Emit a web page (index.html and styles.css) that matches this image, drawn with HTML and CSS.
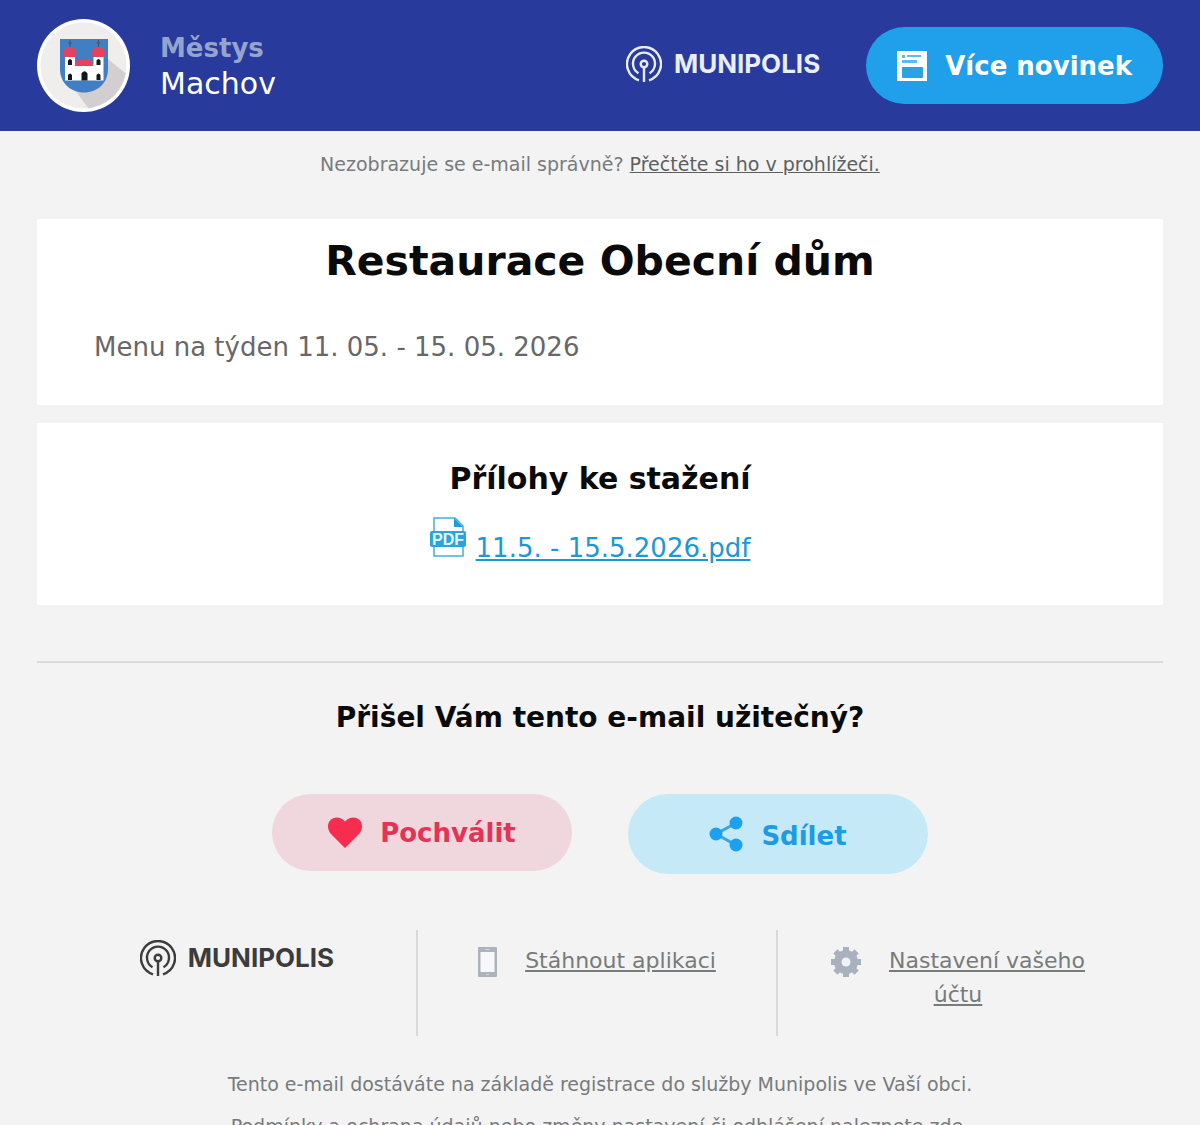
FILE: index.html
```html
<!DOCTYPE html>
<html lang="cs">
<head>
    <meta charset="UTF-8">
    <meta name="viewport" content="width=device-width, initial-scale=1.0">
    <title>Restaurace Obecní dům</title>
    <link rel="stylesheet" href="styles.css">
</head>
<body>
    <header class="header">
        <div class="municipality">
            <svg class="crest" viewBox="0 0 93 93" aria-hidden="true">
                <defs>
                    <clipPath id="crest-circle"><circle cx="46.500" cy="46.500" r="43"/></clipPath>
                </defs>
                <circle cx="46.500" cy="46.500" r="46.500" fill="#fff"/>
                <circle cx="46.500" cy="46.500" r="43" fill="#efeeed"/>
                <path d="M71 40L115 76V115H70L38 71Z" fill="#d3cfd0" clip-path="url(#crest-circle)"/>
                <path d="M23 20H71V50C71 64 60.500 73.500 47 73.500S23 64 23 50Z" fill="#407fc4"/>
                <path d="M33 21V29M61.500 21V29M31 24H35M59.500 24H63.500" stroke="#3d5674" stroke-width="1"/>
                <path d="M28 36H38V45H56.500V36H66.500V61.500H28Z" fill="#fff"/>
                <path d="M27.500 38C24.500 31 28.500 28 33 28S41.500 31 38.500 38ZM56 38C53 31 57 28 61.500 28S70 31 67 38ZM37.500 47L40 41H54L56.500 47Z" fill="#e6415f"/>
                <path d="M31 46V41.500Q33 38.500 35 41.500V46ZM59.500 46V41.500Q61.500 38.500 63.500 41.500V46ZM31 61V56Q33 53 35 56V61ZM59.500 61V56Q61.500 53 63.500 56V61ZM44.500 61.500V54.500Q47.500 50 50.500 54.500V61.500Z" fill="#14171c"/>
            </svg>
            <div class="municipality-name">
                <strong>Městys</strong>
                <span>Machov</span>
            </div>
        </div>
        <div class="header-actions">
            <a class="brand brand-light" href="#">
                <svg class="brand-icon" viewBox="0 0 36 36" fill="none" stroke="currentColor" stroke-width="2.400" aria-hidden="true">
                    <path d="M13 34.300A17 17 0 1 1 23 34.300"/>
                    <path d="M12.500 27.200A11 11 0 1 1 23.500 27.200"/>
                    <circle cx="18" cy="18" r="3.300"/>
                    <path d="M18 21V36"/>
                </svg>
                <span>MUNIPOLIS</span>
            </a>
            <a class="button button-news" href="#">
                <svg class="button-icon" viewBox="0 0 30 30" aria-hidden="true">
                    <path d="M0 0H30V30H0Z" fill="#fff"/>
                    <path d="M5 4H8V7H5ZM10 4H24V6H10ZM5 9H20V12H5Z" fill="#5dbced"/>
                    <rect x="5" y="16" width="21" height="11" rx="1" fill="#2aa3e4"/>
                </svg>
                <span>Více novinek</span>
            </a>
        </div>
    </header>

    <main class="content">
        <p class="preheader">Nezobrazuje se e-mail správně? <a href="#">Přečtěte si ho v prohlížeči.</a></p>

        <section class="card message">
            <h1>Restaurace Obecní dům</h1>
            <p>Menu na týden 11. 05. - 15. 05. 2026</p>
        </section>

        <section class="card attachments">
            <h2>Přílohy ke stažení</h2>
            <div class="attachment">
                <svg class="pdf-icon" viewBox="0 0 36 40" aria-hidden="true">
                    <path d="M4 15V1H25L33 9V15M4 29V39H33V29" fill="#fff" stroke="#45aedb" stroke-width="1.500"/>
                    <path d="M24 1L33 10H24Z" fill="#1d9edb"/>
                    <rect y="14" width="36" height="16" rx="2" fill="#2ba4dc"/>
                    <text class="pdf-label" x="18" y="28" text-anchor="middle">PDF</text>
                </svg>
                <a href="#">11.5. - 15.5.2026.pdf</a>
            </div>
        </section>

        <section class="feedback">
            <h2>Přišel Vám tento e-mail užitečný?</h2>
            <div class="feedback-buttons">
                <a class="button button-like" href="#">
                    <svg class="heart-icon" viewBox="0 0 34 31" aria-hidden="true">
                        <path d="M17 31L3 17C-1 12-1 6 3 2.500S13 0 17 4.500C21 0 27-1 31 2.500S35 12 31 17Z" fill="#f72d50"/>
                    </svg>
                    <span>Pochválit</span>
                </a>
                <a class="button button-share" href="#">
                    <svg class="share-icon" viewBox="0 0 34 36" aria-hidden="true">
                        <path d="M27 7L7 18L27 29" fill="none" stroke="#36a7e9" stroke-width="3"/>
                        <circle cx="7" cy="18" r="6.500" fill="#1da0ee"/>
                        <circle cx="27" cy="7" r="6.500" fill="#1da0ee"/>
                        <circle cx="27" cy="29" r="6.500" fill="#1da0ee"/>
                    </svg>
                    <span>Sdílet</span>
                </a>
            </div>
        </section>
    </main>

    <footer class="footer">
        <div class="footer-columns">
            <div class="footer-column">
                <a class="brand brand-dark" href="#">
                    <svg class="brand-icon" viewBox="0 0 36 36" fill="none" stroke="currentColor" stroke-width="2.400" aria-hidden="true">
                        <path d="M13 34.300A17 17 0 1 1 23 34.300"/>
                        <path d="M12.500 27.200A11 11 0 1 1 23.500 27.200"/>
                        <circle cx="18" cy="18" r="3.300"/>
                        <path d="M18 21V36"/>
                    </svg>
                    <span>MUNIPOLIS</span>
                </a>
            </div>
            <div class="footer-column">
                <svg class="footer-icon" width="19" height="30" viewBox="0 0 19 30" aria-hidden="true">
                    <rect width="19" height="30" rx="1" fill="#adb3bd"/>
                    <path d="M2.500 5H16.500V25H2.500Z" fill="#f6f8fb"/>
                    <path d="M7 2H12V3H7ZM8 27H11V28H8Z" fill="#d4d8de"/>
                </svg><a href="#">Stáhnout aplikaci</a>
            </div>
            <div class="footer-column">
                <svg class="footer-icon" width="30" height="30" viewBox="0 0 30 30" aria-hidden="true">
                    <path d="M15 0V5M15 25V30M0 15H5M25 15H30M4.400 4.400L8 8M22 22L25.600 25.600M4.400 25.600L8 22M22 8L25.600 4.400" stroke="#a9b1be" stroke-width="6"/>
                    <circle cx="15" cy="15" r="12" fill="#a9b1be"/>
                    <circle cx="15" cy="15" r="4.500" fill="#eef3fa"/>
                </svg><a href="#">Nastavení vašeho účtu</a>
            </div>
        </div>
        <div class="legal">
            <p>Tento e-mail dostáváte na základě registrace do služby Munipolis ve Vaší obci.</p>
            <p>Podmínky a ochrana údajů nebo změny nastavení či odhlášení naleznete <a href="#">zde</a>.</p>
        </div>
    </footer>
</body>
</html>
```
FILE: styles.css
```css
* {
    box-sizing: border-box;
}
body {
    margin: 0;
    background-color: #f3f3f3;
    color: #777b7c;
    font-family: "DejaVu Sans", Verdana, sans-serif;
    font-size: 19px;
}
h1, h2, p {
    margin: 0;
}
a {
    color: inherit;
}
svg {
    flex-shrink: 0;
}
.header {
    display: flex;
    align-items: center;
    justify-content: space-between;
    padding: 19px 37px;
    background-color: #283a9b;
}
.municipality {
    display: flex;
    align-items: center;
    gap: 30px;
}
.crest {
    width: 93px;
    height: 93px;
}
.municipality-name {
    display: flex;
    flex-direction: column;
    font-size: 30px;
    line-height: 36px;
    color: #fff;
}
.municipality-name strong {
    font-size: 26px;
    color: #94a4ce;
}
.header-actions {
    display: flex;
    align-items: center;
    gap: 46px;
}
.brand {
    display: flex;
    align-items: center;
    gap: 12px;
    font-family: Inter, "Liberation Sans", sans-serif;
    font-size: 26px;
    font-weight: 700;
    line-height: 36px;
    text-decoration: none;
}
.brand-light {
    padding-bottom: 4px;
    color: #e9eeff;
}
.brand-dark {
    justify-content: center;
    color: #3c3c3c;
}
.brand-icon {
    width: 36px;
    height: 36px;
}
.button {
    display: flex;
    align-items: center;
    justify-content: center;
    gap: 18px;
    border-radius: 40px;
    font-size: 26px;
    font-weight: 700;
    line-height: 36px;
    text-decoration: none;
}
.button-news {
    height: 77px;
    padding: 0 31px;
    background-color: #20a0ea;
    color: #fff;
}
.button-icon {
    width: 30px;
    height: 30px;
}
.content {
    padding: 0 37px;
}
.preheader {
    padding: 20px 0 42px;
    text-align: center;
    line-height: 26px;
}
.preheader a {
    color: #5c5f60;
}
.card {
    margin-bottom: 18px;
    background-color: #fff;
}
.message {
    padding: 14px 57px 38px;
}
.message h1 {
    font-size: 41px;
    line-height: 56px;
    text-align: center;
    color: #0a0a0a;
}
.message p {
    padding-top: 38px;
    font-size: 26px;
    line-height: 40px;
    color: #676767;
}
.attachments {
    padding: 36px 20px 38px;
    text-align: center;
}
.attachments h2, .feedback h2 {
    font-size: 30px;
    line-height: 40px;
    color: #0a0a0a;
}
.attachment {
    display: flex;
    align-items: flex-start;
    justify-content: center;
    gap: 10px;
    padding: 18px 20px 0 0;
    font-size: 26px;
    line-height: 38px;
    color: #1c98d4;
}
.attachment a {
    padding-top: 12px;
}
.pdf-icon {
    width: 36px;
    height: 40px;
}
.pdf-label {
    font-family: "Liberation Sans", sans-serif;
    font-size: 16px;
    font-weight: 700;
    fill: #e4f8ff;
}
.feedback {
    margin-top: 56px;
    padding: 35px 0 56px;
    border-top: 2px solid #dadada;
    text-align: center;
}
.feedback h2 {
    font-size: 28px;
}
.feedback-buttons {
    display: flex;
    align-items: flex-start;
    justify-content: center;
    gap: 56px;
    padding-top: 56px;
}
.feedback-buttons .button {
    width: 300px;
}
.button-like {
    height: 77px;
    background-color: #f0d7de;
    color: #e43356;
}
.button-share {
    height: 80px;
    background-color: #c5e9f7;
    color: #1d9ce4;
}
.button-share span {
    padding-top: 4px;
}
.heart-icon {
    width: 34px;
    height: 31px;
}
.share-icon {
    width: 34px;
    height: 36px;
}
.footer-columns {
    display: grid;
    grid-template-columns: repeat(3, 1fr);
    padding: 0 62px 0 58px;
}
.footer-column {
    min-height: 106px;
    padding: 10px 48px;
    border-right: 2px solid #d9d9d9;
    font-size: 22px;
    line-height: 34px;
    text-align: center;
}
.footer-column:last-child {
    border-right: none;
}
/* icon sits in the text line, so a wrapped label centres under both */
.footer-icon {
    margin: 7px 28px 0 0;
    vertical-align: -9px;
}
.legal {
    padding: 27px 37px;
    text-align: center;
    line-height: 42px;
}
```
